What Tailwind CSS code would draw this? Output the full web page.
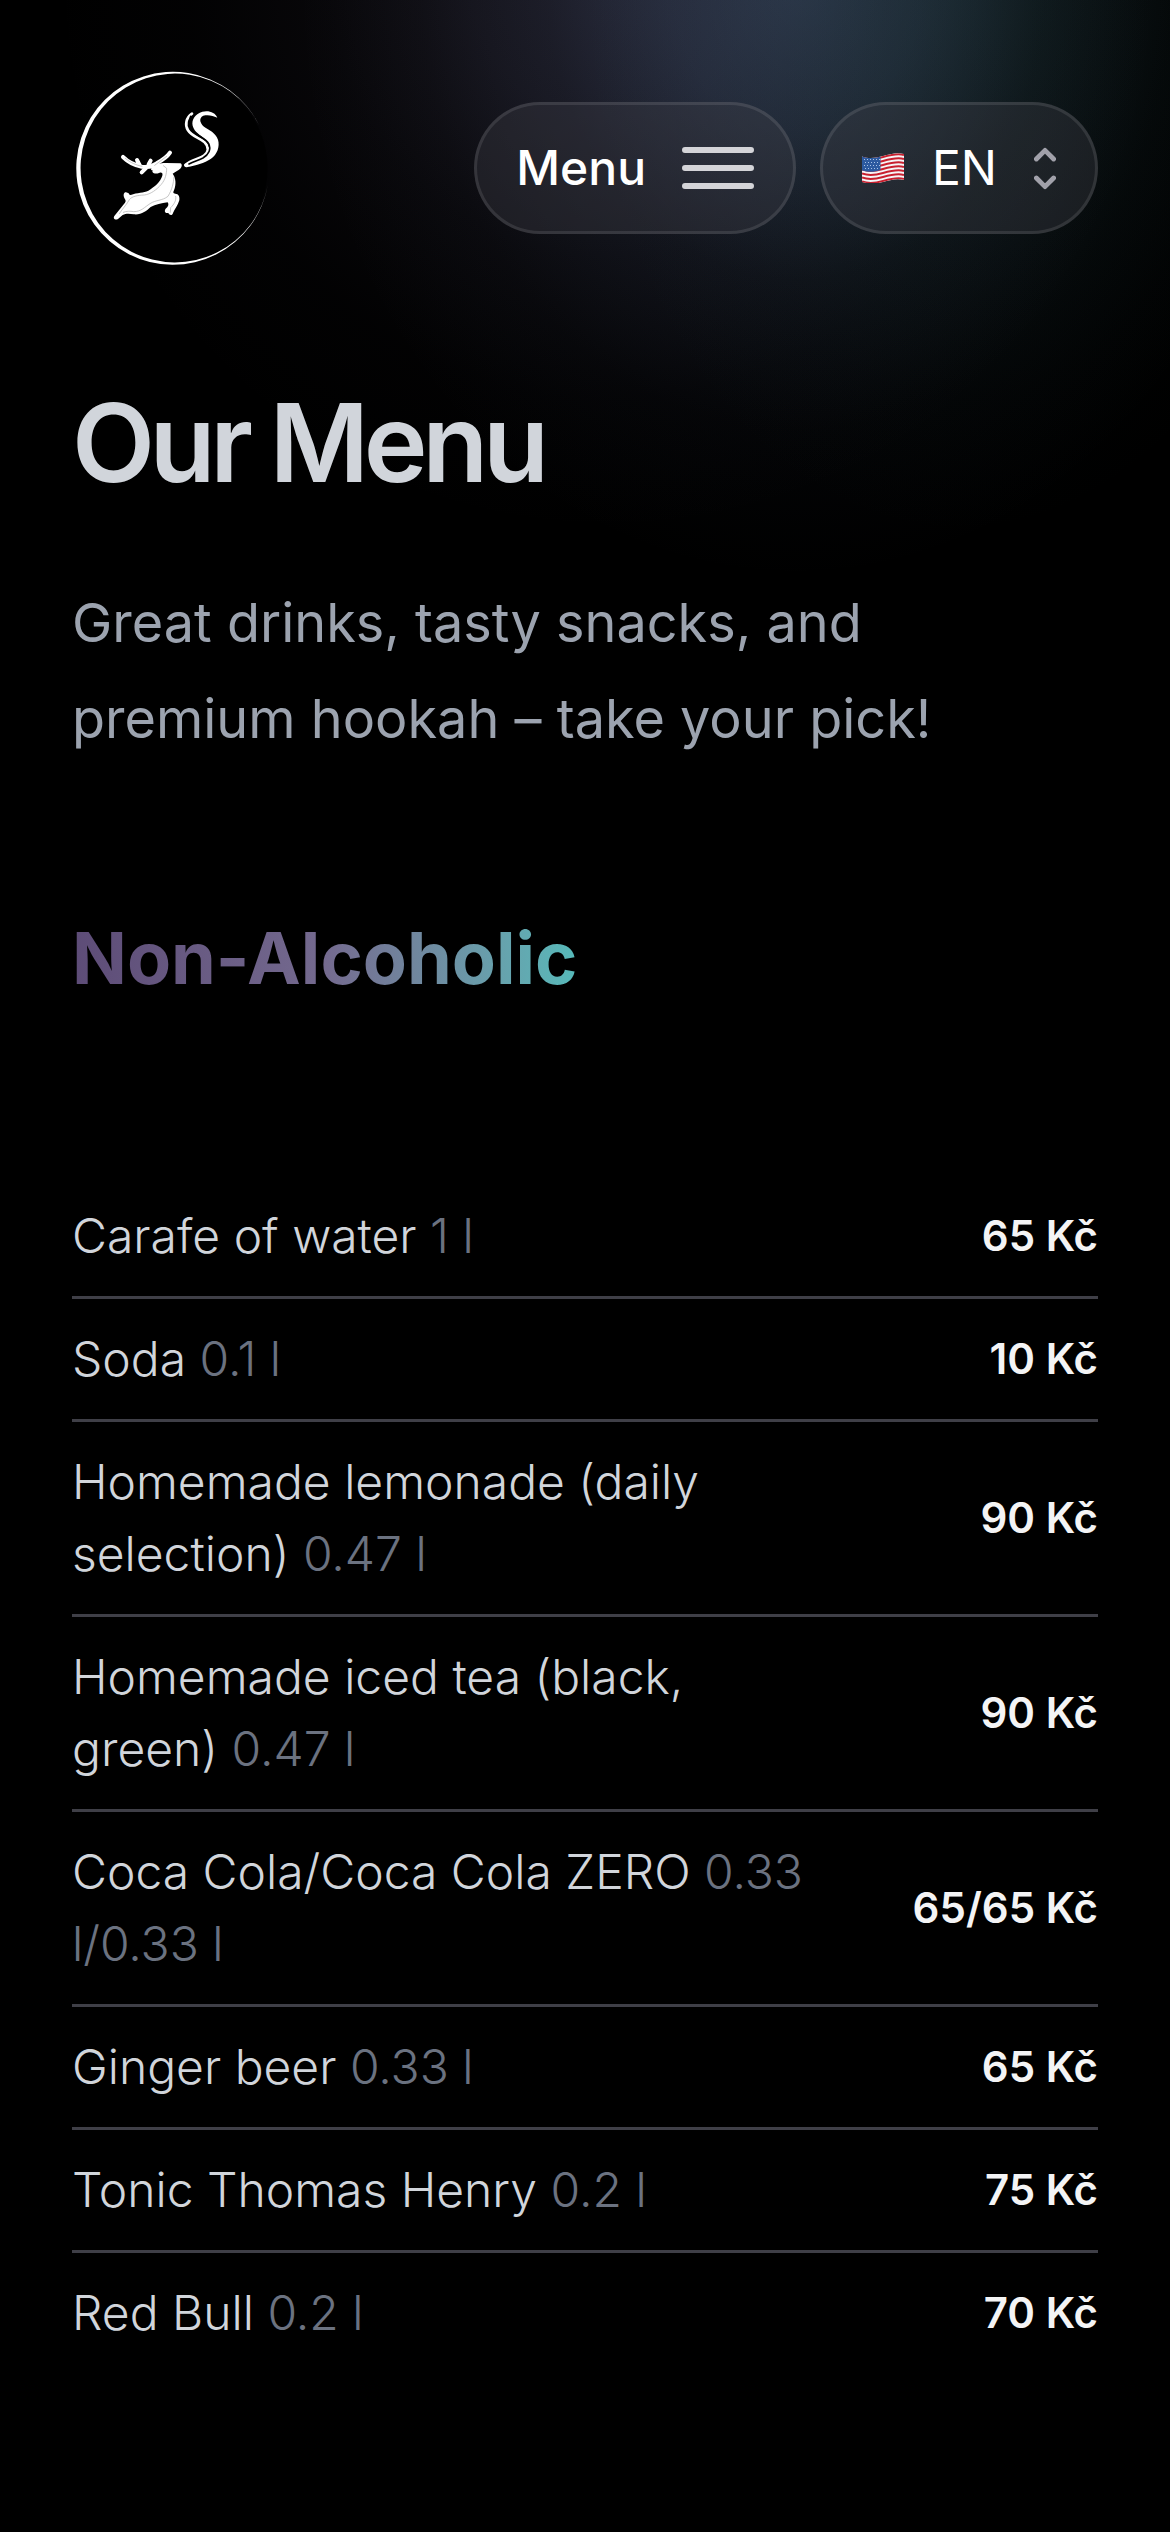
<!DOCTYPE html>
<html lang="en">
<head>
<meta charset="utf-8">
<meta name="viewport" content="width=device-width, initial-scale=1">
<title>Our Menu</title>
<script src="https://cdn.jsdelivr.net/npm/@tailwindcss/browser@4"></script>
</head>
<body class="bg-black font-['Inter',sans-serif] text-white">
<div class="relative min-h-screen overflow-hidden">
  <!-- soft glow behind the header: purple, blue, teal -->
  <div aria-hidden="true" class="absolute inset-x-0 top-0 h-[700px]">
    <div class="absolute inset-0 bg-[radial-gradient(ellipse_560px_560px_at_52%_-20px,rgba(130,115,160,0.17)_0%,rgba(130,115,160,0.13)_25%,rgba(130,115,160,0.06)_50%,rgba(130,115,160,0.015)_75%,transparent_100%)]"></div>
    <div class="absolute inset-0 bg-[radial-gradient(ellipse_500px_600px_at_68%_-20px,rgba(104,132,184,0.32)_0%,rgba(104,132,184,0.24)_25%,rgba(104,132,184,0.1)_50%,rgba(104,132,184,0.03)_75%,transparent_100%)]"></div>
    <div class="absolute inset-0 bg-[radial-gradient(ellipse_380px_560px_at_82%_-20px,rgba(40,110,95,0.14)_0%,rgba(40,110,95,0.11)_25%,rgba(40,110,95,0.06)_50%,rgba(40,110,95,0.02)_75%,transparent_100%)]"></div>
  </div>

  <div class="relative px-[72px]">
    <header class="flex items-center justify-between pt-[66px]">
      <a href="#" aria-label="Home" class="block">
        <svg class="size-[204px]" viewBox="0 0 204 204" fill="none">
          <circle cx="101.500" cy="102" r="94" fill="#000"/>
          <path d="M187 59A96.500 96.500 0 1 0 196 118A94.400 94.400 0 1 1 187 59Z" fill="#fff"/>
          <g transform="translate(28 39) scale(.3333)">
            <!-- smoke -->
            <path d="M352 38C346 22 326 15 307 20C286 26 274 44 278 62C283 82 303 91 317 104C332 119 332 138 314 151C296 164 270 166 255 177C251 184 255 188 263 186C285 182 314 174 333 161C352 148 360 124 354 104C347 82 327 76 312 65C296 52 297 34 316 31C328 29 340 33 352 38Z" fill="#fff"/>
            <path d="M276 26C258 38 254 60 264 76C276 95 298 98 314 112C328 126 326 142 312 152C298 162 274 164 256 180" stroke="#fff" stroke-width="8" stroke-linecap="round"/>
            <path d="M272 34C264 52 270 72 285 84C302 97 318 102 326 116C334 133 326 149 309 159C296 166 281 169 267 177" stroke="#000" stroke-width="5" stroke-linecap="round"/>
            <!-- antlers -->
            <path d="M69 156C84 171 103 181 126 185C146 188 158 183 170 175C188 165 202 155 210 143M111 165L121 184M125 202L141 186L161 184M146 178L152 167" stroke="#fff" stroke-width="12" stroke-linecap="round" stroke-linejoin="round"/>
            <!-- body -->
            <path d="M158 188C166 178 181 174 197 174L241 175C247 177 246 185 242 190C234 198 225 201 218 206C228 220 229 238 222 256C219 262 219 266 226 266C236 266 240 275 238 286C234 301 224 312 219 324C217 333 208 331 205 324C195 326 192 318 197 311C206 304 207 298 203 292C184 295 167 298 152 306C140 318 122 331 101 328C89 326 78 325 68 330L54 342C46 347 38 341 43 333L75 293C79 288 76 284 73 279C68 268 73 259 81 263C88 262 86 270 92 270C112 262 131 264 145 257C164 245 181 231 187 212C189 205 186 202 179 203C165 209 154 204 158 196C151 195 152 189 158 188Z" fill="#fff"/>
            <path d="M190 182L200 190C200 206 196 224 184 238C170 254 152 268 133 270C112 271 96 274 88 284C82 296 70 308 58 326M222 216C220 236 217 252 204 274C186 288 168 284 150 296C134 306 124 320 101 320C90 318 80 318 70 322M227 274C230 286 222 298 212 308L211 322M76 160C92 174 108 180 126 184M164 181L200 154" stroke="#aaa" stroke-width="2" stroke-linecap="round" stroke-linejoin="round"/>
          </g>
        </svg>
      </a>
      <div class="flex gap-6">
        <button type="button" class="flex h-[132px] items-center gap-9 rounded-full border-3 border-white/10 bg-zinc-700/35 px-[39px] text-5xl font-medium">
          Menu
          <svg class="h-[42px] w-[72px]" viewBox="0 0 72 42" stroke="#d4d4d8" stroke-width="6" stroke-linecap="round"><path d="M3 3H69M3 21H69M3 39H69"/></svg>
        </button>
        <label class="flex h-[132px] items-center rounded-full border-3 border-white/10 bg-zinc-700/35 px-[39px]">
          <svg class="h-[30px] w-[42px]" viewBox="0 0 42 30" fill="none">
            <clipPath id="flag"><path d="M0 3.500C7 6 14 5 21 3S35 -1 42 1V27C35 25 28 27 21 29S7 31 0 29Z"/></clipPath>
            <g clip-path="url(#flag)">
              <path d="M0 0H42V30H0Z" fill="#f5f5f7"/>
              <path d="M0 4.500C7 7 14 6 21 4S35 0 42 2M0 8.500C7 11 14 10 21 8S35 4 42 6M0 12.500C7 15 14 14 21 12S35 8 42 10M0 16.500C7 19 14 18 21 16S35 12 42 14M0 20.500C7 23 14 22 21 20S35 16 42 18M0 24.500C7 27 14 26 21 24S35 20 42 22M0 28.500C7 31 14 30 21 28S35 24 42 26" stroke="#c8202f" stroke-width="2"/>
              <path d="M0 3C7 6 13 5 18.500 3.500V17C13 19 7 19.500 0 17.500Z" fill="#2c5aa0"/>
              <path d="M2 6.500H18M3 9.500H18M2 12.500H18M3 15.500H18" stroke="#a9c2e6" stroke-width="1" stroke-dasharray="1 2"/>
            </g>
          </svg>
          <select aria-label="Language" class="ml-7 appearance-none text-5xl"><option>EN</option><option>CS</option></select>
          <svg class="ml-9 h-[45px] w-[22px]" viewBox="0 0 23 45" fill="none" stroke="#a1a1aa" stroke-width="5" stroke-linecap="round" stroke-linejoin="round"><path d="M2.500 12.500L11.500 3.500L20.500 12.500M2.500 32.500L11.500 41.500L20.500 32.500"/></svg>
        </label>
      </div>
    </header>
    <main>
      <h1 class="mt-[119px] text-[108px] leading-[108px] font-semibold tracking-tighter text-[#d1d5db]">Our Menu</h1>
      <p class="mt-[78px] text-[54px] leading-[96px] text-[#9ca3af]">Great drinks, tasty snacks, and premium hookah – take your pick!</p>
      <h2 class="mt-[143px] w-fit bg-linear-to-r from-[#5d4c77] via-[#746a8f] to-[#56baba] bg-clip-text text-7xl leading-[96px] font-bold text-transparent">Non-Alcoholic</h2>
      <table class="mt-[170px] mb-36 w-full text-left">
        <tbody class="divide-y-3 divide-zinc-700">
          <tr><td class="py-6 text-5xl leading-[72px] font-light text-[#d1d5db]">Carafe of water <span class="text-[#6b7280]">1 l</span></td><td class="py-6 pl-24 text-right text-[42px] leading-[72px] font-semibold whitespace-nowrap text-zinc-100">65 Kč</td></tr>
          <tr><td class="py-6 text-5xl leading-[72px] font-light text-[#d1d5db]">Soda <span class="text-[#6b7280]">0.1 l</span></td><td class="py-6 pl-24 text-right text-[42px] leading-[72px] font-semibold whitespace-nowrap text-zinc-100">10 Kč</td></tr>
          <tr><td class="py-6 text-5xl leading-[72px] font-light text-[#d1d5db]">Homemade lemonade (daily selection) <span class="text-[#6b7280]">0.47 l</span></td><td class="py-6 pl-24 text-right text-[42px] leading-[72px] font-semibold whitespace-nowrap text-zinc-100">90 Kč</td></tr>
          <tr><td class="py-6 text-5xl leading-[72px] font-light text-[#d1d5db]">Homemade iced tea (black, green) <span class="text-[#6b7280]">0.47 l</span></td><td class="py-6 pl-24 text-right text-[42px] leading-[72px] font-semibold whitespace-nowrap text-zinc-100">90 Kč</td></tr>
          <tr><td class="py-6 text-5xl leading-[72px] font-light text-[#d1d5db]">Coca Cola/Coca Cola ZERO <span class="text-[#6b7280]">0.33 l/0.33 l</span></td><td class="py-6 pl-24 text-right text-[42px] leading-[72px] font-semibold whitespace-nowrap text-zinc-100">65/65 Kč</td></tr>
          <tr><td class="py-6 text-5xl leading-[72px] font-light text-[#d1d5db]">Ginger beer <span class="text-[#6b7280]">0.33 l</span></td><td class="py-6 pl-24 text-right text-[42px] leading-[72px] font-semibold whitespace-nowrap text-zinc-100">65 Kč</td></tr>
          <tr><td class="py-6 text-5xl leading-[72px] font-light text-[#d1d5db]">Tonic Thomas Henry <span class="text-[#6b7280]">0.2 l</span></td><td class="py-6 pl-24 text-right text-[42px] leading-[72px] font-semibold whitespace-nowrap text-zinc-100">75 Kč</td></tr>
          <tr><td class="py-6 text-5xl leading-[72px] font-light text-[#d1d5db]">Red Bull <span class="text-[#6b7280]">0.2 l</span></td><td class="py-6 pl-24 text-right text-[42px] leading-[72px] font-semibold whitespace-nowrap text-zinc-100">70 Kč</td></tr>
        </tbody>
      </table>
    </main>
  </div>
</div>
</body>
</html>
